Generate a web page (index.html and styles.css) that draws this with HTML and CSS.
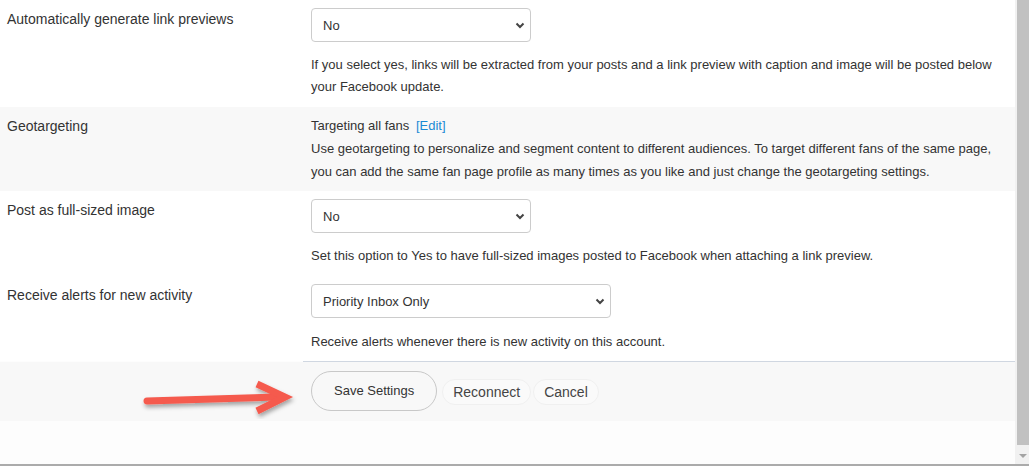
FILE: index.html
```html
<!DOCTYPE html>
<html lang="en">
<head>
    <meta charset="UTF-8">
    <meta name="viewport" content="width=device-width, initial-scale=1.0">
    <title>Profile Settings</title>
    <link rel="stylesheet" href="styles.css">
</head>
<body>

<div class="window">
    <div class="content">
        <div class="row">
            <div class="label">Automatically generate link previews</div>
            <div class="value">
                <span class="select-wrap">
                    <select class="select">
                        <option>No</option>
                        <option>Yes</option>
                    </select>
                    <svg class="chevron" width="10" height="7" viewBox="0 0 10 7"><path d="M1.5 1.5 L5 5 L8.5 1.5" fill="none" stroke="#444" stroke-width="2"/></svg>
                </span>
                <p class="help">If you select yes, links will be extracted from your posts and a link preview with caption and image will be posted below your Facebook update.</p>
            </div>
        </div>

        <div class="row shaded">
            <div class="label">Geotargeting</div>
            <div class="value geo">
                <p class="help">Targeting all fans <a href="#" class="edit">[Edit]</a></p>
                <p class="help">Use geotargeting to personalize and segment content to different audiences. To target different fans of the same page, you can add the same fan page profile as many times as you like and just change the geotargeting settings.</p>
            </div>
        </div>

        <div class="row post">
            <div class="label">Post as full-sized image</div>
            <div class="value">
                <span class="select-wrap">
                    <select class="select">
                        <option>No</option>
                        <option>Yes</option>
                    </select>
                    <svg class="chevron" width="10" height="7" viewBox="0 0 10 7"><path d="M1.5 1.5 L5 5 L8.5 1.5" fill="none" stroke="#444" stroke-width="2"/></svg>
                </span>
                <p class="help">Set this option to Yes to have full-sized images posted to Facebook when attaching a link preview.</p>
            </div>
        </div>

        <div class="row alerts">
            <div class="label">Receive alerts for new activity</div>
            <div class="value">
                <span class="select-wrap wide">
                    <select class="select">
                        <option>Priority Inbox Only</option>
                        <option>All Activity</option>
                        <option>None</option>
                    </select>
                    <svg class="chevron" width="10" height="7" viewBox="0 0 10 7"><path d="M1.5 1.5 L5 5 L8.5 1.5" fill="none" stroke="#444" stroke-width="2"/></svg>
                </span>
                <p class="help">Receive alerts whenever there is new activity on this account.</p>
            </div>
        </div>

        <div class="footer">
            <svg class="arrow" width="170" height="44" viewBox="0 0 170 44">
                <defs>
                    <filter id="shadow" x="-10%" y="-30%" width="120%" height="160%">
                        <feDropShadow dx="1" dy="3" stdDeviation="2" flood-color="#000" flood-opacity="0.35"/>
                    </filter>
                </defs>
                <g filter="url(#shadow)" stroke="#f55a4e" stroke-width="7" stroke-linecap="round" fill="none">
                    <path d="M10 26 L140 22"/>
                    <path d="M120 9 L148 22 L120 36" stroke-linecap="butt" stroke-linejoin="miter"/>
                </g>
            </svg>
            <div class="actions">
                <button class="btn primary">Save Settings</button>
                <button class="btn plain">Reconnect</button>
                <button class="btn plain">Cancel</button>
            </div>
        </div>
    </div>
    <div class="scrollbar">
        <div class="thumb"></div>
        <div class="arrow-down"></div>
    </div>
</div>

</body>
</html>
```

FILE: styles.css
```css
body {
    margin: 0;
    font-family: "Liberation Sans", Arial, sans-serif;
    color: #333;
    background: #fff;
}
.window {
    display: flex;
    height: 464px;
    border-bottom: 2px solid #ababab;
    background: #fdfdfd;
}
.content {
    flex: 1;
}
.row {
    display: flex;
    background: #fff;
}
.row.shaded {
    background: #f8f8f8;
}
.label {
    width: 296px;
    padding: 11px 0 0 7px;
    font-size: 14px;
}
.value {
    flex: 1;
    padding: 8px 0 8px 8px;
}
.row:first-child .value {
    padding-bottom: 9px;
}
.value.geo {
    padding-top: 7px;
}
.row.post .value {
    padding-bottom: 9px;
}
.row.alerts .help {
    margin-top: 13px;
}
.help {
    margin: 12px 0 0;
    font-size: 13px;
    line-height: 22px;
}
.geo .help {
    margin: 0;
    line-height: 23px;
}
.edit {
    color: #1a8ad4;
    text-decoration: none;
    margin-left: 3px;
}
.select-wrap {
    position: relative;
    display: block;
    width: 220px;
}
.select-wrap.wide {
    width: 300px;
}
.select {
    appearance: none;
    -webkit-appearance: none;
    display: block;
    width: 100%;
    height: 34px;
    padding: 0 11px;
    border: 1px solid #ccc;
    border-radius: 4px;
    background: #fff;
    font-family: inherit;
    font-size: 13px;
    color: #333;
}
.chevron {
    position: absolute;
    right: 6px;
    top: 14px;
    pointer-events: none;
}
.footer {
    position: relative;
    border-top: 1px solid #d0d7e1;
    margin-left: 303px;
}
.actions {
    box-sizing: border-box;
    display: flex;
    align-items: center;
    gap: 4px;
    height: 59px;
    padding-bottom: 2px;
    margin-left: -303px;
    padding-left: 311px;
    background: #f8f8f8;
}
.btn {
    font-family: inherit;
    color: #333;
    cursor: pointer;
}
.btn.primary {
    height: 40px;
    padding: 0 22px;
    border: 1px solid #c8c8c8;
    border-radius: 20px;
    background: #f8f8f8;
    font-size: 13px;
    margin-right: 1px;
}
.btn.plain {
    height: 26px;
    margin-top: 2px;
    padding: 0 10px;
    border: 1px solid #f0f0f0;
    border-radius: 13px;
    background: #fafafa;
    font-size: 14px;
    color: #444;
}
.btn.plain + .btn.plain {
    margin-left: -2px;
}
.arrow {
    position: absolute;
    left: -166px;
    top: 13px;
}
.scrollbar {
    width: 13px;
    display: flex;
    flex-direction: column;
    border-left: 1px solid #f1f1f1;
    background: #f1f1f1;
}
.thumb {
    flex: 1;
    background: #c1c1c1;
    margin-left: 1px;
    margin-bottom: 2px;
}
.arrow-down {
    height: 17px;
    display: flex;
    justify-content: center;
    align-items: center;
}
.arrow-down::before {
    content: "";
    border-left: 4px solid transparent;
    border-right: 4px solid transparent;
    border-top: 4px solid #a3a3a3;
}
```
